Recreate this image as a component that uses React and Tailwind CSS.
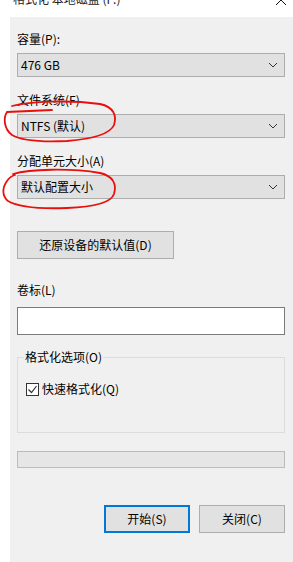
import React, { useState } from "react";

const font = { fontFamily: '"Noto Sans CJK SC", "Noto Sans", sans-serif' };

function Chevron() {
  return (
    <svg width="10" height="6" viewBox="0 0 10 6" className="shrink-0">
      <path d="M1 1 L5 5 L9 1" fill="none" stroke="#333" strokeWidth="1" />
    </svg>
  );
}

function Select({ value }) {
  return (
    <div className="flex h-[24px] items-center justify-between border border-[#adadad] bg-[#e1e1e1] pl-[3px] pr-[6px] text-[12px] text-black">
      <span>{value}</span>
      <Chevron />
    </div>
  );
}

export default function App() {
  const [quick, setQuick] = useState(true);

  return (
    <div className="relative flex h-[562px] w-[293px] flex-col overflow-hidden bg-white text-[12px] text-black" style={font}>
      {/* title bar, cut at the top */}
      <div className="flex h-[17px] shrink-0 items-start justify-between pl-[13px] pr-[6px]">
        <span className="-mt-[9px] text-[12px] leading-[16px] text-[#222]">格式化 本地磁盘 (F:)</span>
        <svg width="12" height="12" viewBox="0 0 12 12" className="-mt-[6px]">
          <path d="M1 1 L11 11 M11 1 L1 11" stroke="#111" strokeWidth="1" />
        </svg>
      </div>

      {/* dialog body */}
      <div className="ml-[10px] flex flex-1 flex-col bg-[#f0f0f0] pl-[7px] pr-[8px]">
        <div className="mt-[15px] leading-[14px]">容量(P):</div>
        <div className="mt-[7px]">
          <Select value="476 GB" />
        </div>

        <div className="mt-[16px] leading-[14px]">文件系统(F)</div>
        <div className="mt-[7px]">
          <Select value="NTFS (默认)" />
        </div>

        <div className="mt-[16px] leading-[14px]">分配单元大小(A)</div>
        <div className="mt-[7px]">
          <Select value="默认配置大小" />
        </div>

        <button className="mt-[32px] h-[28px] w-[157px] border border-[#adadad] bg-[#e1e1e1] text-[12px]">
          还原设备的默认值(D)
        </button>

        <div className="mt-[24px] leading-[14px]">卷标(L)</div>
        <input
          className="mt-[10px] h-[28px] w-full border border-[#7a7a7a] bg-white px-[3px] text-[12px] outline-none"
          defaultValue=""
        />

        {/* options group */}
        <div className="relative mt-[22px] h-[76px] border border-[#dcdcdc]">
          <span className="absolute -top-[9px] left-[6px] bg-[#f0f0f0] px-[1px] leading-[16px]">格式化选项(O)</span>
          <label className="mt-[22px] ml-[8px] flex items-center gap-[3px]" onClick={() => setQuick(!quick)}>
            <span className="flex h-[13px] w-[13px] items-center justify-center border border-[#333] bg-white">
              {quick && (
                <svg width="11" height="11" viewBox="0 0 11 11">
                  <path d="M1.5 5.5 L4.5 8.5 L9.5 2" fill="none" stroke="#333" strokeWidth="1.2" />
                </svg>
              )}
            </span>
            <span>快速格式化(Q)</span>
          </label>
        </div>

        {/* progress bar */}
        <div className="mt-[18px] h-[17px] w-full border border-[#bcbcbc] bg-[#e6e6e6]" />

        <div className="mt-[37px] flex justify-end gap-[9px]">
          <button className="h-[28px] w-[86px] border-2 border-[#0078d7] bg-[#e1e1e1] text-[12px]">开始(S)</button>
          <button className="h-[28px] w-[86px] border border-[#adadad] bg-[#e1e1e1] text-[12px]">关闭(C)</button>
        </div>
      </div>

      {/* red hand-drawn marks */}
      <svg className="pointer-events-none absolute left-0 top-0" width="293" height="562" viewBox="0 0 293 562">
        <path
          d="M12 106 C30 101 70 100 100 104 C114 107 117 116 114 125 C110 134 92 139 67 141 C45 142 22 141 12 135 C4 129 3 118 7 112 L52 110"
          fill="none"
          stroke="#e8100e"
          strokeWidth="1.8"
          strokeLinecap="round"
        />
        <path
          d="M13 174 C30 169 70 168 100 173 C113 176 117 184 114 194 C111 203 95 207 67 208 C40 209 18 207 8 201 C2 196 2 188 7 181 C9 178 11 176 15 175"
          fill="none"
          stroke="#e8100e"
          strokeWidth="1.8"
          strokeLinecap="round"
        />
      </svg>
    </div>
  );
}
